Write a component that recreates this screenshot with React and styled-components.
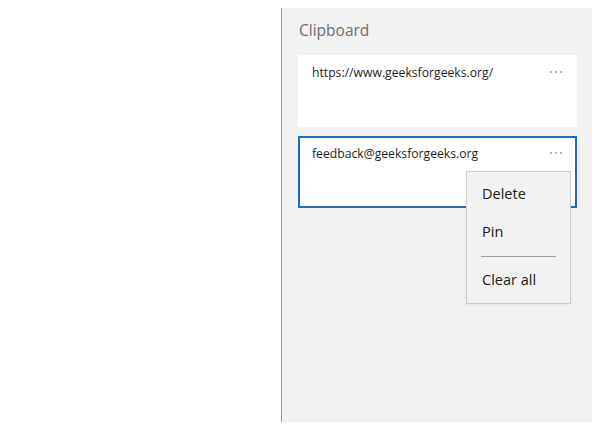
import React from "react";
import styled, { createGlobalStyle } from "styled-components";

const Global = createGlobalStyle`
  html, body { margin: 0; padding: 0; background: #ffffff; }
  body { font-family: "Open Sans", "Noto Sans", sans-serif; }
`;

const Page = styled.div`
  display: flex;
  width: 600px;
  height: 426px;
  padding-top: 8px;
  box-sizing: border-box;
`;

const Blank = styled.div`
  width: 281px;
  flex: none;
`;

const Panel = styled.div`
  width: 311px;
  height: 414px;
  flex: none;
  background: #f2f2f2;
  border-left: 1px solid #9c9c9c;
  box-sizing: border-box;
  padding: 12px 15px 0 16px;
  display: flex;
  flex-direction: column;
`;

const Title = styled.div`
  font-size: 15.5px;
  color: #6e6e6e;
  line-height: 20px;
  padding-left: 1px;
  margin-bottom: 15px;
`;

const List = styled.div`
  display: flex;
  flex-direction: column;
  gap: 9px;
`;

const Card = styled.div`
  position: relative;
  height: 72px;
  box-sizing: border-box;
  background: #ffffff;
  border: 2px solid ${(p) => (p.$selected ? "#1b6ec2" : "#ffffff")};
  padding: 7px 12px 0 12px;
  display: flex;
  align-items: flex-start;
  justify-content: space-between;
`;

const CardText = styled.div`
  font-size: 12.2px;
  color: #1e1e1e;
  line-height: 18px;
`;

const More = styled.div`
  display: flex;
  gap: 3px;
  padding-top: 7px;
  margin-right: 1px;
`;

const Dot = styled.span`
  width: 2px;
  height: 2px;
  border-radius: 50%;
  background: #9a9a9a;
`;

const Menu = styled.div`
  position: absolute;
  left: 166px;
  top: 33px;
  width: 105px;
  height: 133px;
  box-sizing: border-box;
  background: #f2f2f2;
  border: 1px solid #cccccc;
  box-shadow: 0 1px 3px rgba(0, 0, 0, 0.06);
  padding: 9px 0 0 0;
  display: flex;
  flex-direction: column;
  overflow: hidden;
`;

const Item = styled.div`
  flex: none;
  font-size: 14.5px;
  color: #1a1a1a;
  height: 38px;
  line-height: 26px;
  padding-left: 15px;
`;

const Separator = styled.div`
  flex: none;
  height: 1px;
  background: #a0a0a0;
  margin: -1px 14px 10px 14px;
`;

function Ellipsis() {
  return (
    <More>
      <Dot />
      <Dot />
      <Dot />
    </More>
  );
}

export default function App() {
  return (
    <>
      <Global />
      <Page>
        <Blank />
        <Panel>
          <Title>Clipboard</Title>
          <List>
            <Card>
              <CardText>https://www.geeksforgeeks.org/</CardText>
              <Ellipsis />
            </Card>
            <Card $selected>
              <CardText>feedback@geeksforgeeks.org</CardText>
              <Ellipsis />
              <Menu>
                <Item>Delete</Item>
                <Item>Pin</Item>
                <Separator />
                <Item>Clear all</Item>
              </Menu>
            </Card>
          </List>
        </Panel>
      </Page>
    </>
  );
}
